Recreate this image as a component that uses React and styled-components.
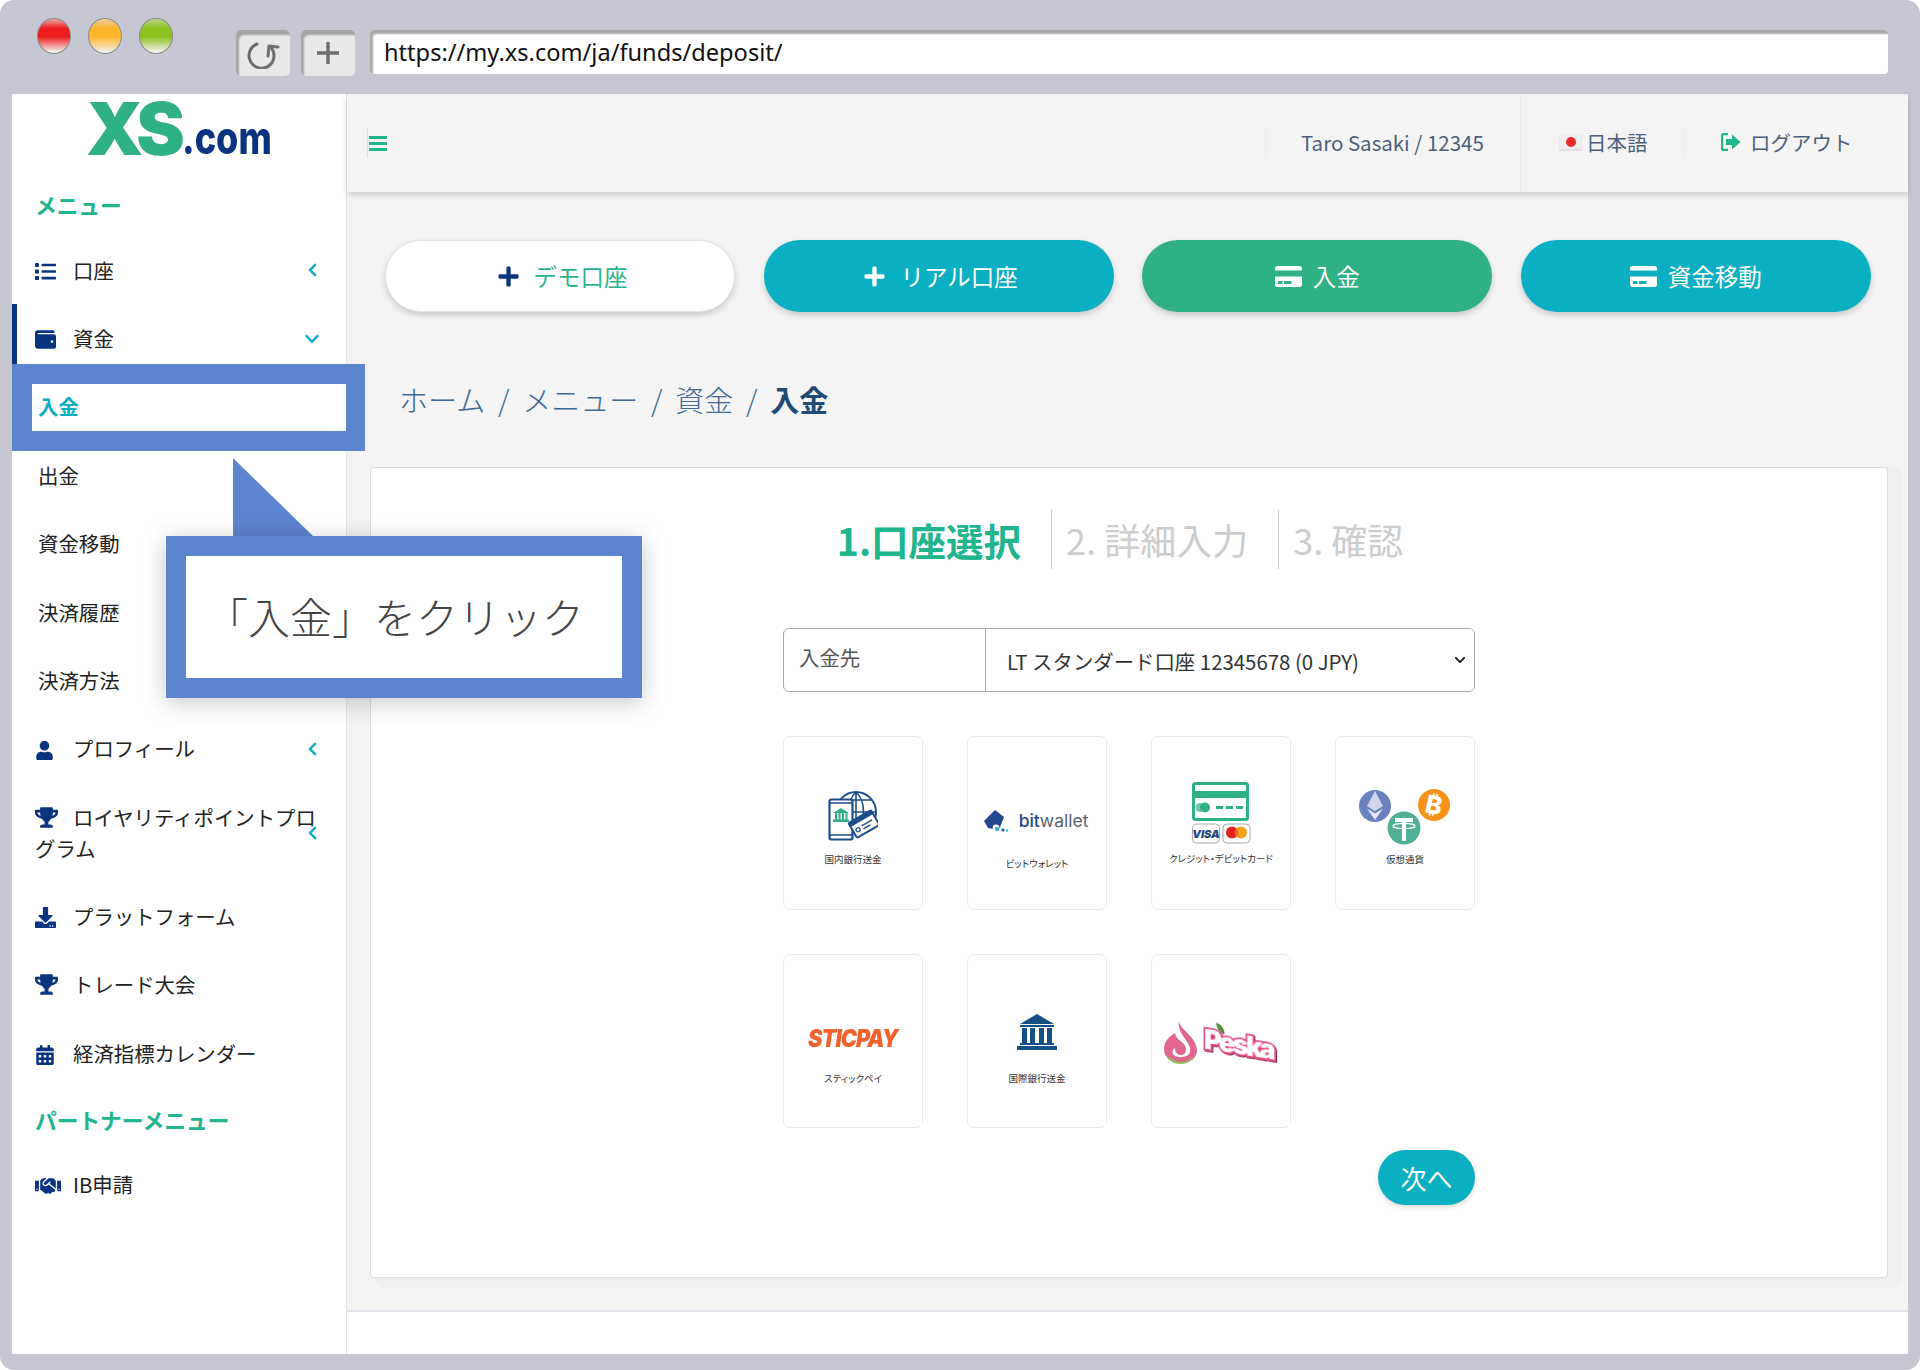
import React from "react";
import styled, { createGlobalStyle } from "styled-components";
import {
  FaList,
  FaWallet,
  FaUser,
  FaTrophy,
  FaDownload,
  FaCalendarAlt,
  FaHandshake,
  FaPlus,
  FaCreditCard,
  FaChevronLeft,
  FaChevronDown,
} from "react-icons/fa";

const GlobalStyle = createGlobalStyle`
  html, body {
    margin: 0;
    padding: 0;
    background: #fff;
  }
  * {
    box-sizing: border-box;
  }
  body {
    font-family: "Noto Sans CJK JP", "Noto Sans", sans-serif;
  }
`;

const Frame = styled.div`
  position: relative;
  width: 1920px;
  height: 1370px;
  display: flex;
  flex-direction: column;
  padding: 0 12px 16px;
  background: #c7c7d4;
  border-radius: 14px;
  overflow: hidden;
`;

const Chrome = styled.div`
  flex: 0 0 94px;
  display: flex;
  align-items: flex-start;
`;

const Lights = styled.div`
  display: flex;
  gap: 17px;
  padding: 18px 0 0 25px;
  width: 224px;
`;

const Light = styled.span`
  width: 34px;
  height: 36px;
  border-radius: 50%;
  border: 1px solid #8a8a8a;
  background: linear-gradient(
    ${(p) => p.$light} 0%,
    ${(p) => p.$main} 28%,
    ${(p) => p.$main} 52%,
    #f2efe8 96%
  );
`;

const ChromeButton = styled.div`
  width: 54px;
  height: 46px;
  margin: 30px 11px 0 0;
  display: flex;
  align-items: center;
  justify-content: center;
  background: #e8e8e8;
  border-radius: 5px;
  box-shadow: inset 3px 5px 2px #a5a5a5;
`;

const UrlBar = styled.div`
  width: 1518px;
  height: 44px;
  margin: 30px 0 0 4px;
  padding: 3px 0 0 14px;
  background: #fff;
  border-radius: 4px;
  box-shadow: inset 3px 4px 2px #a9a9a9;
  font-family: "Noto Sans", sans-serif;
  font-size: 23.6px;
  line-height: 38px;
  color: #111;
`;

const Viewport = styled.div`
  flex: 1;
  display: flex;
  min-height: 0;
  background: #fff;
`;

const Sidebar = styled.aside`
  flex: 0 0 335px;
  background: #fff;
  border-right: 1px solid #e4e4ea;
`;

const Logo = styled.div`
  height: 79px;
  padding: 0 0 13px 74px;
  display: flex;
  align-items: flex-end;
  font-family: "Inter", sans-serif;
  font-weight: 900;
  line-height: 1;
`;

const LogoMark = styled.span`
  font-size: 73px;
  letter-spacing: -6px;
  color: #30b085;
  margin: 0 0 -5px;
`;

const LogoDomain = styled.span`
  font-size: 45px;
  color: #0a3480;
  font-weight: 800;
  transform: scaleX(0.8);
  transform-origin: left bottom;
  margin: 0 0 0 3px;
`;

const SectionTitle = styled.div`
  height: 63px;
  padding: ${(p) => p.$top}px 0 0 23px;
  font-size: 21.7px;
  line-height: 30px;
  font-weight: 700;
  color: #20b58c;
`;

const NavItem = styled.div`
  position: relative;
  padding: 18.7px 24px 18.7px ${(p) => (p.$sub ? 26 : 23)}px;
  font-size: 20.4px;
  line-height: 31px;
  color: ${(p) => (p.$current ? "#0aafc1" : "#222")};
  font-weight: ${(p) => (p.$current ? 700 : 400)};
  border-left: ${(p) => (p.$active ? "5px solid #0a3480" : "0")};
  ${(p) => p.$active && "padding-left: 18px;"}
  svg.lead {
    color: #0a3480;
    vertical-align: -3px;
    margin-right: ${(p) => p.$gap ?? 17}px;
  }
`;

const Caret = styled.span`
  position: absolute;
  right: 26px;
  top: 50%;
  transform: translateY(-50%);
  display: flex;
  color: #0aafc1;
`;

const Main = styled.main`
  flex: 1;
  display: flex;
  flex-direction: column;
  min-width: 0;
  background: #f4f4f4;
`;

const TopBar = styled.header`
  flex: 0 0 98px;
  display: flex;
  align-items: center;
  background: #f4f4f4;
  box-shadow: 0 3px 6px rgba(0, 0, 0, 0.16);
  color: #4d5f7d;
  font-size: 20.5px;
`;

const Burger = styled.div`
  margin-left: 20px;
  padding-left: 1px;
  height: 30px;
  border-left: 1px solid #ddd;
  display: flex;
  flex-direction: column;
  justify-content: center;
  gap: 3px;
  span {
    width: 18px;
    height: 3px;
    background: #20b58c;
  }
`;

const TopCell = styled.div`
  display: flex;
  align-items: center;
  height: ${(p) => (p.$tall ? "98px" : "30px")};
  margin-left: ${(p) => p.$ml ?? 0}px;
  width: ${(p) => p.$w}px;
  padding: 0 0 2px ${(p) => p.$pl}px;
  border-left: 1px solid #ebebeb;
`;

const Flag = styled.span`
  width: 23px;
  height: 17px;
  margin-right: 4px;
  display: flex;
  align-items: center;
  justify-content: center;
  background: #f0efef;
  box-shadow: inset 0 -2px 2px #ddd;
  &::after {
    content: "";
    width: 10px;
    height: 10px;
    border-radius: 50%;
    background: #ee2a2a;
  }
`;

const LogoutLabel = styled.span`
  margin-left: 9px;
`;

const Content = styled.div`
  flex: 1;
  padding: 48px 20px 32px 23px;
  display: flex;
  flex-direction: column;
  min-height: 0;
`;

const Actions = styled.div`
  display: grid;
  grid-template-columns: repeat(4, 350px);
  column-gap: 28.6px;
  padding-left: 15px;
`;

const ActionButton = styled.div`
  height: 72px;
  border-radius: 36px;
  display: flex;
  align-items: center;
  justify-content: center;
  gap: ${(p) => (p.$wide ? 11 : 14)}px;
  padding-left: ${(p) => (p.$wide ? 0 : 4)}px;
  font-size: 23.5px;
  color: ${(p) => (p.$outline ? "#2bb58e" : "#fff")};
  background: ${(p) => p.$bg};
  box-shadow: 0 3px 6px rgba(0, 0, 0, 0.18);
  ${(p) => p.$outline && "border: 1px solid #e2e2ea;"}
  svg {
    color: ${(p) => (p.$outline ? "#0a3480" : "#fff")};
  }
`;

const Crumbs = styled.nav`
  display: flex;
  align-items: center;
  height: 40px;
  margin: 67px 0 48px 29px;
  font-size: 29px;
  color: #3f6a95;
  font-weight: 300;
`;

const CrumbSep = styled.span`
  width: 37px;
  text-align: center;
`;

const CrumbNow = styled.strong`
  color: #1f4a75;
  font-weight: 700;
`;

const Card = styled.section`
  flex: 1;
  display: flex;
  flex-direction: column;
  align-items: center;
  background: #fff;
  border: 1px solid #dcdce4;
  border-radius: 4px;
  box-shadow: 10px 5px 0 5px #efefef;
  min-height: 0;
`;

const Steps = styled.div`
  display: flex;
  align-items: center;
  height: 59px;
  margin: 42px 0 59px;
  padding-right: 18px;
`;

const Step = styled.div`
  font-size: ${(p) => (p.$on ? 37.5 : 36)}px;
  line-height: 59px;
  font-weight: ${(p) => (p.$on ? 700 : 400)};
  color: ${(p) => (p.$on ? "#20b58c" : "#ccc")};
  padding: 0 ${(p) => p.$pr}px 0 ${(p) => p.$pl}px;
  border-left: ${(p) => (p.$on ? "0" : "1px solid #ccc")};
`;

const Form = styled.div`
  width: 692px;
  display: flex;
  flex-direction: column;
`;

const AccountRow = styled.div`
  display: flex;
  height: 64px;
  border: 1px solid #a8a8a8;
  border-radius: 6px;
  overflow: hidden;
`;

const AccountLabel = styled.label`
  flex: 0 0 202px;
  padding: 0 0 6px 15px;
  display: flex;
  align-items: center;
  border-right: 1px solid #a8a8a8;
  font-size: 20.4px;
  color: #555;
`;

const SelectWrap = styled.div`
  position: relative;
  flex: 1;
  display: flex;
`;

const AccountSelect = styled.select`
  flex: 1;
  appearance: none;
  border: 0;
  background: #fff;
  padding: 1px 0 0 21px;
  font-family: inherit;
  font-size: 20.4px;
  color: #333;
  outline: none;
`;

const SelectArrow = styled.span`
  position: absolute;
  right: 8px;
  top: 50%;
  transform: translateY(-50%);
  display: flex;
  color: #222;
  pointer-events: none;
`;

const Methods = styled.div`
  display: grid;
  grid-template-columns: repeat(4, 140px);
  grid-auto-rows: 174px;
  gap: 44px;
  margin-top: 44px;
`;

const Method = styled.div`
  border: 1.5px solid #ebebef;
  border-radius: 7px;
  display: flex;
  flex-direction: column;
  align-items: center;
  justify-content: flex-start;
  padding-top: ${(p) => p.$top}px;
  color: #333;
`;

const MethodCaption = styled.div`
  margin-top: ${(p) => p.$mt}px;
  font-size: 9.5px;
  line-height: 14px;
  white-space: nowrap;
  font-feature-settings: "palt";
`;

const BitwalletLogo = styled.div`
  display: flex;
  align-items: center;
  gap: 8px;
  margin-left: -3px;
  font-family: "Inter", sans-serif;
  font-size: 17.5px;
  line-height: 22px;
  color: #5b6270;
  b {
    color: #23478f;
    font-weight: 500;
  }
`;

const SticpayLogo = styled.div`
  font-family: "Inter", sans-serif;
  font-size: 24px;
  line-height: 24px;
  font-weight: 900;
  font-style: italic;
  letter-spacing: -1px;
  color: #f2622e;
  transform: scaleX(0.9);
`;

const PeskaLogo = styled.div`
  display: flex;
  align-items: flex-start;
  gap: 6px;
  width: 114px;
`;

const PeskaWord = styled.span`
  position: relative;
  margin-top: 8px;
  font-family: "Inter", sans-serif;
  font-size: 27px;
  line-height: 32px;
  font-weight: 900;
  letter-spacing: -2.6px;
  color: #fff;
  -webkit-text-stroke: 3.5px #e8508c;
  paint-order: stroke fill;
  transform: skewY(9deg);
  filter: drop-shadow(1.5px 1.5px 0 #8e1f45);
`;

const PeskaLeaf = styled.svg`
  position: absolute;
  left: 12px;
  top: -3px;
`;

const Next = styled.div`
  align-self: flex-end;
  width: 97px;
  height: 55px;
  margin-top: 22px;
  border-radius: 28px;
  display: flex;
  align-items: center;
  justify-content: center;
  font-size: 26px;
  color: #fff;
  background: #0aafc1;
  box-shadow: 0 2px 5px rgba(0, 0, 0, 0.16);
`;

const FootBar = styled.footer`
  flex: 0 0 44px;
  background: #fff;
  border-top: 2px solid #e2e2ea;
`;

const Highlight = styled.div`
  position: absolute;
  left: 12px;
  top: 364px;
  width: 353px;
  height: 87px;
  border: 20px solid #5d84cf;
  border-right-width: 19px;
`;

const Callout = styled.div`
  position: absolute;
  left: 166px;
  top: 536px;
  width: 476px;
  height: 162px;
  display: flex;
  align-items: center;
  padding: 0 0 4px 20px;
  background: #fff;
  border: 20px solid #5d84cf;
  font-size: 42px;
  font-weight: 300;
  color: #444;
  box-shadow: 0 4px 24px rgba(0, 0, 0, 0.22);
  white-space: nowrap;
`;

const CalloutTail = styled.div`
  position: absolute;
  left: 233px;
  top: 458px;
  width: 80px;
  height: 78px;
  background: #5d84cf;
  clip-path: polygon(0 0, 100% 100%, 0 100%);
`;

const ReloadIcon = () => (
  <svg width="36" height="32" viewBox="0 0 36 32" fill="none" stroke="#6e6e6e" strokeWidth="3" strokeLinecap="round">
    <path d="M12 7 A12.5 12.5 0 1 0 25 9.5" />
    <path d="M33 10 L24 9 L23 19" strokeLinejoin="round" />
  </svg>
);

const PlusIcon = () => (
  <svg width="22" height="22" viewBox="0 0 22 22" stroke="#6e6e6e" strokeWidth="3.4">
    <path d="M11 0 V22 M0 11 H22" />
  </svg>
);

const LogoutIcon = () => (
  <svg width="20" height="18" viewBox="0 0 20 18">
    <path d="M7 1 H3 Q1 1 1 3 V15 Q1 17 3 17 H7" fill="none" stroke="#20b58c" strokeWidth="2.4" />
    <path d="M5 6 H11 V1.5 L19.5 9 L11 16.5 V12 H5 Z" fill="#20b58c" />
  </svg>
);

const BankTransferIcon = () => (
  <svg width="50" height="50" viewBox="0 0 50 50" fill="none" stroke="#1d4e89">
    <circle cx="28" cy="21" r="20" strokeWidth="2" />
    <path d="M28 1 V41 M8 21 H48 M28 1 C18 10 18 32 28 41 M28 1 C38 10 38 32 28 41 M12 9 H44" strokeWidth="1.6" />
    <rect x="1.5" y="8.5" width="23" height="40" rx="2" fill="#fff" strokeWidth="2.2" />
    <path d="M1 12 H25 M1 44 H25" strokeWidth="1.6" />
    <path d="M5 22 L13 17 L21 22 Z M5 31 H21 V28.5 H5 Z" fill="#30b085" stroke="none" />
    <path d="M8 22 V29 M11.5 22 V29 M15 22 V29 M18.5 22 V29" stroke="#30b085" strokeWidth="2" />
    <g transform="rotate(-30 36 33)">
      <rect x="23" y="24.5" width="26" height="17" rx="1.5" fill="#fff" strokeWidth="2" />
      <rect x="23" y="25" width="26" height="4" fill="#1d4e89" stroke="none" />
      <path d="M33 33.5 H45 M33 37 H41" strokeWidth="1.4" />
      <circle cx="28" cy="35" r="2" strokeWidth="1.3" />
    </g>
  </svg>
);

const BitwalletMark = () => (
  <svg width="28" height="24" viewBox="0 0 28 24">
    <path d="M1 12 L12 1 L21 8 L16 21 L5 19 Z" fill="#23478f" />
    <circle cx="13" cy="19" r="3.4" fill="#fff" />
    <circle cx="14" cy="20" r="2.2" fill="#35b6dc" />
    <circle cx="20" cy="21" r="1.5" fill="#23478f" />
    <circle cx="24" cy="21.5" r="1.2" fill="#35b6dc" />
  </svg>
);

const CardIcon = () => (
  <svg width="60" height="62" viewBox="0 0 60 62" style={{ marginLeft: 2 }}>
    <rect x="1.5" y="1.5" width="54" height="36" rx="2" fill="#fff" stroke="#30b085" strokeWidth="3" />
    <rect x="2" y="9" width="53" height="7" fill="#30b085" />
    <circle cx="8" cy="25.5" r="4.5" fill="#30b085" opacity="0.7" />
    <circle cx="13" cy="25.5" r="5" fill="#30b085" />
    <path d="M24 25.5 H31 M34 25.5 H41 M44 25.5 H51" stroke="#30b085" strokeWidth="3" />
    <rect x="0.5" y="42" width="27" height="19" rx="4" fill="#fff" stroke="#aaa" />
    <text x="14" y="56" textAnchor="middle" fontFamily="Inter, sans-serif" fontSize="11" fontWeight="900" fontStyle="italic" fill="#24467f">
      VISA
    </text>
    <rect x="31" y="42" width="27" height="19" rx="4" fill="#fff" stroke="#aaa" />
    <circle cx="40" cy="50.5" r="6" fill="#e2231a" />
    <circle cx="49" cy="50.5" r="6" fill="#f79e1b" />
    <path d="M44.5 46.5 A6 6 0 0 1 44.5 54.5 A6 6 0 0 1 44.5 46.5" fill="#f26522" />
  </svg>
);

const CryptoIcon = () => (
  <svg width="92" height="58" viewBox="0 0 92 58">
    <circle cx="16" cy="19" r="16" fill="#6b80be" />
    <path d="M16 4 L24 19 L16 24 L8 19 Z" fill="#cfd6ec" />
    <path d="M8 21.5 L16 26.5 L24 21.5 L16 33 Z" fill="#e6eaf6" />
    <circle cx="75" cy="18" r="16" fill="#f7931a" />
    <text x="75" y="27" textAnchor="middle" fontFamily="Inter, sans-serif" fontSize="25" fontWeight="800" fill="#fff" transform="rotate(12 75 18)">
      ₿
    </text>
    <circle cx="45" cy="41" r="16.5" fill="#50af95" />
    <path d="M36 31 H54 V35 H47 V54 H43 V35 H36 Z" fill="#fff" />
    <ellipse cx="45" cy="39" rx="11" ry="2.6" fill="none" stroke="#fff" strokeWidth="1.4" />
  </svg>
);

const BankIcon = () => (
  <svg width="40" height="36" viewBox="0 0 40 36" fill="#164f85">
    <path d="M20 0 L37 10 H3 Z" />
    <rect x="3" y="11" width="34" height="2" />
    <rect x="5" y="14" width="5" height="15" />
    <rect x="13" y="14" width="5" height="15" />
    <rect x="22" y="14" width="5" height="15" />
    <rect x="30" y="14" width="5" height="15" />
    <rect x="3" y="29" width="34" height="2" />
    <rect x="0" y="32" width="40" height="4" />
  </svg>
);

const PeachMark = () => (
  <svg width="34" height="44" viewBox="0 0 34 44" style={{ flex: "none" }}>
    <path d="M15 0 C15 8 32 15 33 29 C33 38 25 42 17 42 C8 42 0 37 0 28 C0 20 6 15 11 12 C12 20 21 20 22 28 C22 32 20 34 17 34 C13 34 11 31 11 27 C7 29 7 36 17 36 C24 36 27 32 26 27 C24 18 13 12 15 0 Z" fill="#e2658f" />
    <path d="M2 34 C8 38 12 41 17 41 C22 41 27 38 31 34 C28 40 22 43 17 43 C10 43 5 40 2 34 Z" fill="#8fbf52" />
  </svg>
);

const navItems = [
  { label: "口座", Icon: FaList, caret: "left", size: 21 },
  { label: "資金", Icon: FaWallet, caret: "down", size: 21, active: true },
  { label: "入金", sub: true, current: true },
  { label: "出金", sub: true },
  { label: "資金移動", sub: true },
  { label: "決済履歴", sub: true },
  { label: "決済方法", sub: true },
  { label: "プロフィール", Icon: FaUser, caret: "left", size: 19, gap: 19 },
  { label: "ロイヤリティポイントプログラム", Icon: FaTrophy, caret: "left", size: 23, gap: 15 },
  { label: "プラットフォーム", Icon: FaDownload, caret: null, size: 21, gap: 17 },
  { label: "トレード大会", Icon: FaTrophy, caret: null, size: 23, gap: 15 },
  { label: "経済指標カレンダー", Icon: FaCalendarAlt, caret: null, size: 20, gap: 18 },
];

const renderNav = (item) => (
  <NavItem key={item.label + (item.sub ? "s" : "")} $sub={item.sub} $current={item.current} $active={item.active} $gap={item.gap}>
    {item.Icon && <item.Icon className="lead" size={item.size} />}
    {item.label}
    {item.caret === "left" && (
      <Caret>
        <FaChevronLeft size={15} />
      </Caret>
    )}
    {item.caret === "down" && (
      <Caret>
        <FaChevronDown size={16} />
      </Caret>
    )}
  </NavItem>
);

const App = () => {
  return (
    <Frame>
      <GlobalStyle />
      <Chrome>
        <Lights>
          <Light $light="#e9a8a0" $main="#ee1c1c" />
          <Light $light="#e8cf9c" $main="#fdb52a" />
          <Light $light="#bcd58c" $main="#8dc21f" />
        </Lights>
        <ChromeButton>
          <ReloadIcon />
        </ChromeButton>
        <ChromeButton>
          <PlusIcon />
        </ChromeButton>
        <UrlBar>https://my.xs.com/ja/funds/deposit/</UrlBar>
      </Chrome>
      <Viewport>
        <Sidebar>
          <Logo>
            <LogoMark>XS</LogoMark>
            <LogoDomain>.com</LogoDomain>
          </Logo>
          <SectionTitle $top={17}>メニュー</SectionTitle>
          {navItems.map(renderNav)}
          <SectionTitle $top={17}>パートナーメニュー</SectionTitle>
          <NavItem $gap={12}>
            <FaHandshake className="lead" size={26} style={{ verticalAlign: "-6px" }} />
            IB申請
          </NavItem>
        </Sidebar>
        <Main>
          <TopBar>
            <Burger>
              <span />
              <span />
              <span />
            </Burger>
            <TopCell $ml={878} $w={255} $pl={35}>
              Taro Sasaki / 12345
            </TopCell>
            <TopCell $tall $w={164} $pl={38}>
              <Flag />
              日本語
            </TopCell>
            <TopCell $w={200} $pl={36}>
              <LogoutIcon />
              <LogoutLabel>ログアウト</LogoutLabel>
            </TopCell>
          </TopBar>
          <Content>
            <Actions>
              <ActionButton $outline $bg="#fff">
                <FaPlus size={23} />
                デモ口座
              </ActionButton>
              <ActionButton $bg="#0aafc1">
                <FaPlus size={23} />
                リアル口座
              </ActionButton>
              <ActionButton $wide $bg="#30b085">
                <FaCreditCard size={27} />
                入金
              </ActionButton>
              <ActionButton $wide $bg="#0aafc1">
                <FaCreditCard size={27} />
                資金移動
              </ActionButton>
            </Actions>
            <Crumbs>
              ホーム<CrumbSep>/</CrumbSep>メニュー<CrumbSep>/</CrumbSep>資金<CrumbSep>/</CrumbSep>
              <CrumbNow>入金</CrumbNow>
            </Crumbs>
            <Card>
              <Steps>
                <Step $on $pl={0} $pr={30}>
                  1.口座選択
                </Step>
                <Step $pl={14} $pr={30}>
                  2. 詳細入力
                </Step>
                <Step $pl={14} $pr={0}>
                  3. 確認
                </Step>
              </Steps>
              <Form>
                <AccountRow>
                  <AccountLabel>入金先</AccountLabel>
                  <SelectWrap>
                    <AccountSelect defaultValue="lt">
                      <option value="lt">LT スタンダード口座 12345678 (0 JPY)</option>
                    </AccountSelect>
                    <SelectArrow>
                      <FaChevronDown size={12} />
                    </SelectArrow>
                  </SelectWrap>
                </AccountRow>
                <Methods>
                  <Method $top={54}>
                    <BankTransferIcon />
                    <MethodCaption $mt={11}>国内銀行送金</MethodCaption>
                  </Method>
                  <Method $top={72}>
                    <BitwalletLogo>
                      <BitwalletMark />
                      <span>
                        <b>bit</b>wallet
                      </span>
                    </BitwalletLogo>
                    <MethodCaption $mt={23}>ビットウォレット</MethodCaption>
                  </Method>
                  <Method $top={45}>
                    <CardIcon />
                    <MethodCaption $mt={7}>クレジット・デビットカード</MethodCaption>
                  </Method>
                  <Method $top={50}>
                    <CryptoIcon />
                    <MethodCaption $mt={7}>仮想通貨</MethodCaption>
                  </Method>
                  <Method $top={72}>
                    <SticpayLogo>STICPAY</SticpayLogo>
                    <MethodCaption $mt={20}>スティックペイ</MethodCaption>
                  </Method>
                  <Method $top={59}>
                    <BankIcon />
                    <MethodCaption $mt={21}>国際銀行送金</MethodCaption>
                  </Method>
                  <Method $top={66}>
                    <PeskaLogo>
                      <PeachMark />
                      <PeskaWord>
                        Peska
                        <PeskaLeaf width="8" height="10" viewBox="0 0 8 10">
                          <path d="M0 0 C5 1 8 5 7 10 C3 8 0 5 0 0 Z" fill="#4f9a3a" />
                        </PeskaLeaf>
                      </PeskaWord>
                    </PeskaLogo>
                  </Method>
                </Methods>
                <Next>次へ</Next>
              </Form>
            </Card>
          </Content>
          <FootBar />
        </Main>
      </Viewport>
      <Highlight />
      <CalloutTail />
      <Callout>「入金」をクリック</Callout>
    </Frame>
  );
};

export default App;
